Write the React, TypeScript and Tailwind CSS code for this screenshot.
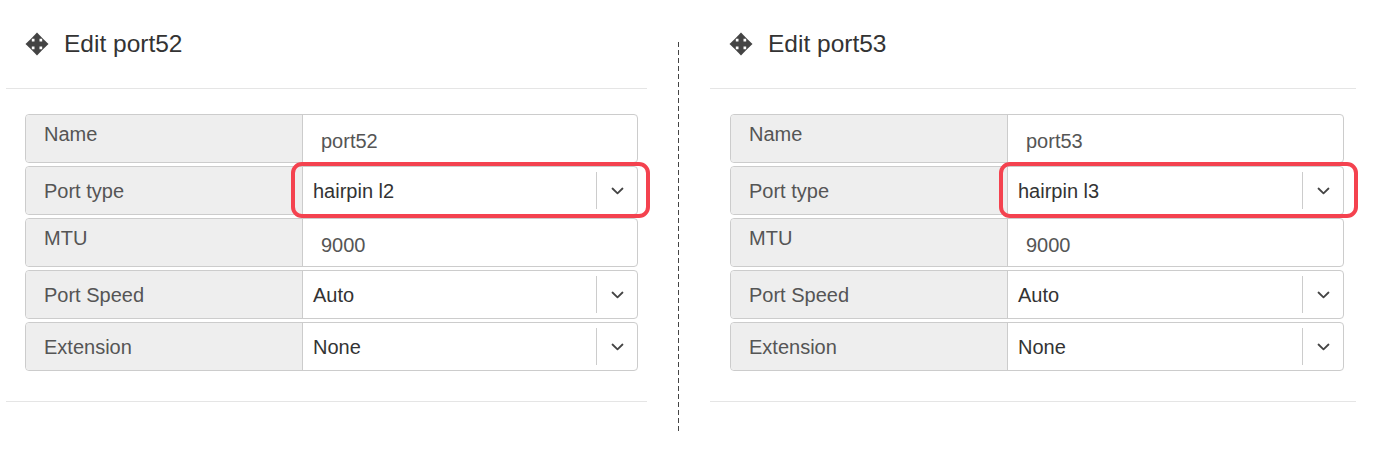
import React from "react";

function MoveIcon() {
  return (
    <svg width="24" height="24" viewBox="0 0 24 24" className="shrink-0">
      <g fill="#444444">
        <rect x="9.5" y="5" width="5" height="14" />
        <rect x="5" y="9.5" width="14" height="5" />
        <polygon points="12,0.5 18,6.8 6,6.8" />
        <polygon points="12,23.5 18,17.2 6,17.2" />
        <polygon points="0.5,12 6.8,6 6.8,18" />
        <polygon points="23.5,12 17.2,6 17.2,18" />
      </g>
    </svg>
  );
}

function Chevron() {
  return (
    <svg width="13" height="8" viewBox="0 0 13 8">
      <path d="M1.5 1.5 L6.5 6.3 L11.5 1.5" fill="none" stroke="#444" strokeWidth="1.8" strokeLinecap="round" strokeLinejoin="round" />
    </svg>
  );
}

type Row = { label: string; value: string; kind: "input" | "select"; highlight?: boolean };

function FormRow({ row, hlLeft, hlRight }: { row: Row; hlLeft: string; hlRight: string }) {
  const isSelect = row.kind === "select";
  return (
    <div className="flex h-[49px] border border-[#cccccc] rounded-[4px] bg-white">
      <div
        className={
          "w-[277px] shrink-0 bg-[#eeeeee] border-r border-[#cccccc] rounded-l-[4px] pl-[18px] text-[20px] leading-[28px] text-[#555555] " +
          (isSelect ? "flex items-center" : "pt-[5px]")
        }
      >
        {row.label}
      </div>
      <div className="relative flex-1 flex items-stretch">
        {isSelect ? (
          <>
            <div className="flex-1 flex items-center pl-[10px] text-[20px] leading-[28px] text-[#333333]">{row.value}</div>
            <div className="w-[41px] flex items-center justify-center my-[5px] border-l border-[#cccccc]">
              <Chevron />
            </div>
          </>
        ) : (
          <div className="flex-1 flex items-center pl-[18px] pt-[4px] text-[20px] leading-[28px] text-[#555555]">{row.value}</div>
        )}
        {row.highlight && (
          <div
            className={
              "absolute top-[-5px] bottom-[-4px] border-[4px] border-[#f4424f] rounded-[11px] pointer-events-none " +
              hlLeft +
              " " +
              hlRight
            }
          />
        )}
      </div>
    </div>
  );
}

function Panel({
  port,
  pType,
  width,
  formMl,
  formW,
  hlLeft,
  hlRight,
}: {
  port: string;
  pType: string;
  width: string;
  formMl: string;
  formW: string;
  hlLeft: string;
  hlRight: string;
}) {
  const rows: Row[] = [
    { label: "Name", value: port, kind: "input" },
    { label: "Port type", value: pType, kind: "select", highlight: true },
    { label: "MTU", value: "9000", kind: "input" },
    { label: "Port Speed", value: "Auto", kind: "select" },
    { label: "Extension", value: "None", kind: "select" },
  ];
  return (
    <div className={"shrink-0 flex flex-col " + width}>
      <div className="mt-[30px] pb-[30px] border-b border-[#e5e5e5] flex items-center h-[59px] pl-[19px]">
        <div className="flex items-center h-[28px] gap-[15px]">
          <MoveIcon />
          <span className="text-[24.5px] leading-[28px] text-[#333333]">Edit {port}</span>
        </div>
      </div>
      <div className={"mt-[25px] flex flex-col gap-[3px] " + formMl + " " + formW}>
        {rows.map((r) => (
          <FormRow key={r.label} row={r} hlLeft={hlLeft} hlRight={hlRight} />
        ))}
      </div>
      <div className="mt-[30px] border-b border-[#e5e5e5]" />
    </div>
  );
}

export default function App() {
  return (
    <div className="w-[1390px] h-[452px] bg-white flex font-['Liberation_Sans',Arial,Helvetica,sans-serif] overflow-hidden">
      <div className="ml-[6px]">
        <Panel
          port="port52"
          pType="hairpin l2"
          width="w-[641px]"
          formMl="ml-[19px]"
          formW="w-[613px]"
          hlLeft="left-[-12px]"
          hlRight="right-[-13px]"
        />
      </div>
      <div className="ml-[31px] mt-[42px] w-px h-[392px] bg-[repeating-linear-gradient(to_bottom,#444444_0px,#444444_5px,transparent_5px,transparent_8px)]" />
      <div className="ml-[31px]">
        <Panel
          port="port53"
          pType="hairpin l3"
          width="w-[646px]"
          formMl="ml-[20px]"
          formW="w-[614px]"
          hlLeft="left-[-9px]"
          hlRight="right-[-15px]"
        />
      </div>
    </div>
  );
}
